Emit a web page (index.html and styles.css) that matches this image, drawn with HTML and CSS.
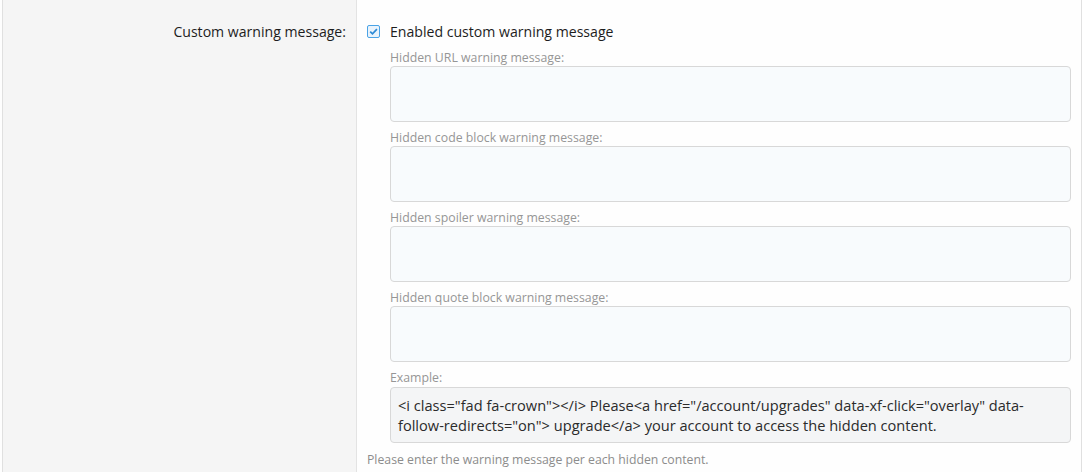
FILE: index.html
```html
<!DOCTYPE html>
<html>
<head>
<meta charset="utf-8">
<link rel="stylesheet" href="styles.css">
</head>
<body>
<div class="form">
  <div class="row">
    <div class="label-col"><span class="row-label">Custom warning message:</span></div>
    <div class="input-col">
      <label class="check">
        <span class="box"><svg width="11" height="11" viewBox="0 0 11 11"><path d="M2.2 5.6 L4.5 7.9 L8.9 3.2" fill="none" stroke="#2d8ad6" stroke-width="1.7"/></svg></span>
        <span class="check-text">Enabled custom warning message</span>
      </label>
      <div class="dep">
        <div class="field-label">Hidden URL warning message:</div>
        <textarea class="ta"></textarea>
        <div class="field-label">Hidden code block warning message:</div>
        <textarea class="ta"></textarea>
        <div class="field-label">Hidden spoiler warning message:</div>
        <textarea class="ta"></textarea>
        <div class="field-label">Hidden quote block warning message:</div>
        <textarea class="ta"></textarea>
        <div class="field-label">Example:</div>
        <div class="example">&lt;i class="fad fa-crown"&gt;&lt;/i&gt; Please&lt;a href="/account/upgrades" data-xf-click="overlay" data-follow-redirects="on"&gt; upgrade&lt;/a&gt; your account to access the hidden content.</div>
      </div>
      <div class="explain">Please enter the warning message per each hidden content.</div>
    </div>
  </div>
</div>
</body>
</html>
```
FILE: styles.css
```css
html, body {
  margin: 0;
  padding: 0;
  background: #fefefe;
}
body {
  font-family: "Open Sans", "Noto Sans", sans-serif;
  color: #141414;
}
.form {
  width: 1078px;
  margin-left: 2px;
  border-left: 1px solid #e0e0e0;
  border-right: 1px solid #e0e0e0;
  height: 472px;
  overflow: hidden;
}
.row {
  display: flex;
  height: 100%;
}
.label-col {
  width: 343px;
  background: #f5f5f5;
  border-right: 1px solid #e3e3e3;
  text-align: right;
  padding: 20px 10px 0 0;
  flex: none;
}
.row-label {
  font-size: 14.1px;
  line-height: 22px;
  color: #1d1d1d;
}
.input-col {
  flex: 1;
  padding: 20px 10px 0 10px;
}
.check {
  display: flex;
  align-items: center;
  height: 22px;
}
.box {
  box-sizing: border-box;
  width: 13px;
  height: 13px;
  border: 1px solid #4aa3e6;
  border-radius: 2px;
  background: #e9f3fc;
  display: flex;
  align-items: center;
  justify-content: center;
  margin-right: 10px;
}
.check-text {
  font-size: 14.1px;
  color: #1d1d1d;
}
.dep {
  padding-left: 23px;
}
.field-label {
  font-size: 12.3px;
  color: #969696;
  line-height: 16px;
  margin-top: 8px;
}
.ta {
  display: block;
  box-sizing: border-box;
  width: 100%;
  height: 56px;
  margin: 0;
  background: #f8fbfd;
  border: 1px solid #d8d8d8;
  border-radius: 4px;
  resize: none;
  outline: none;
}
.example {
  box-sizing: border-box;
  margin-top: 1px;
  background: #f4f5f6;
  border: 1px solid #d8d8d8;
  border-radius: 4px;
  padding: 7px 8px 7px 7px;
  font-size: 14.6px;
  line-height: 20px;
  color: #2b2b2b;
}
.explain {
  font-size: 12.25px;
  line-height: 16px;
  color: #8c8c8c;
  margin-top: 9px;
}
```
